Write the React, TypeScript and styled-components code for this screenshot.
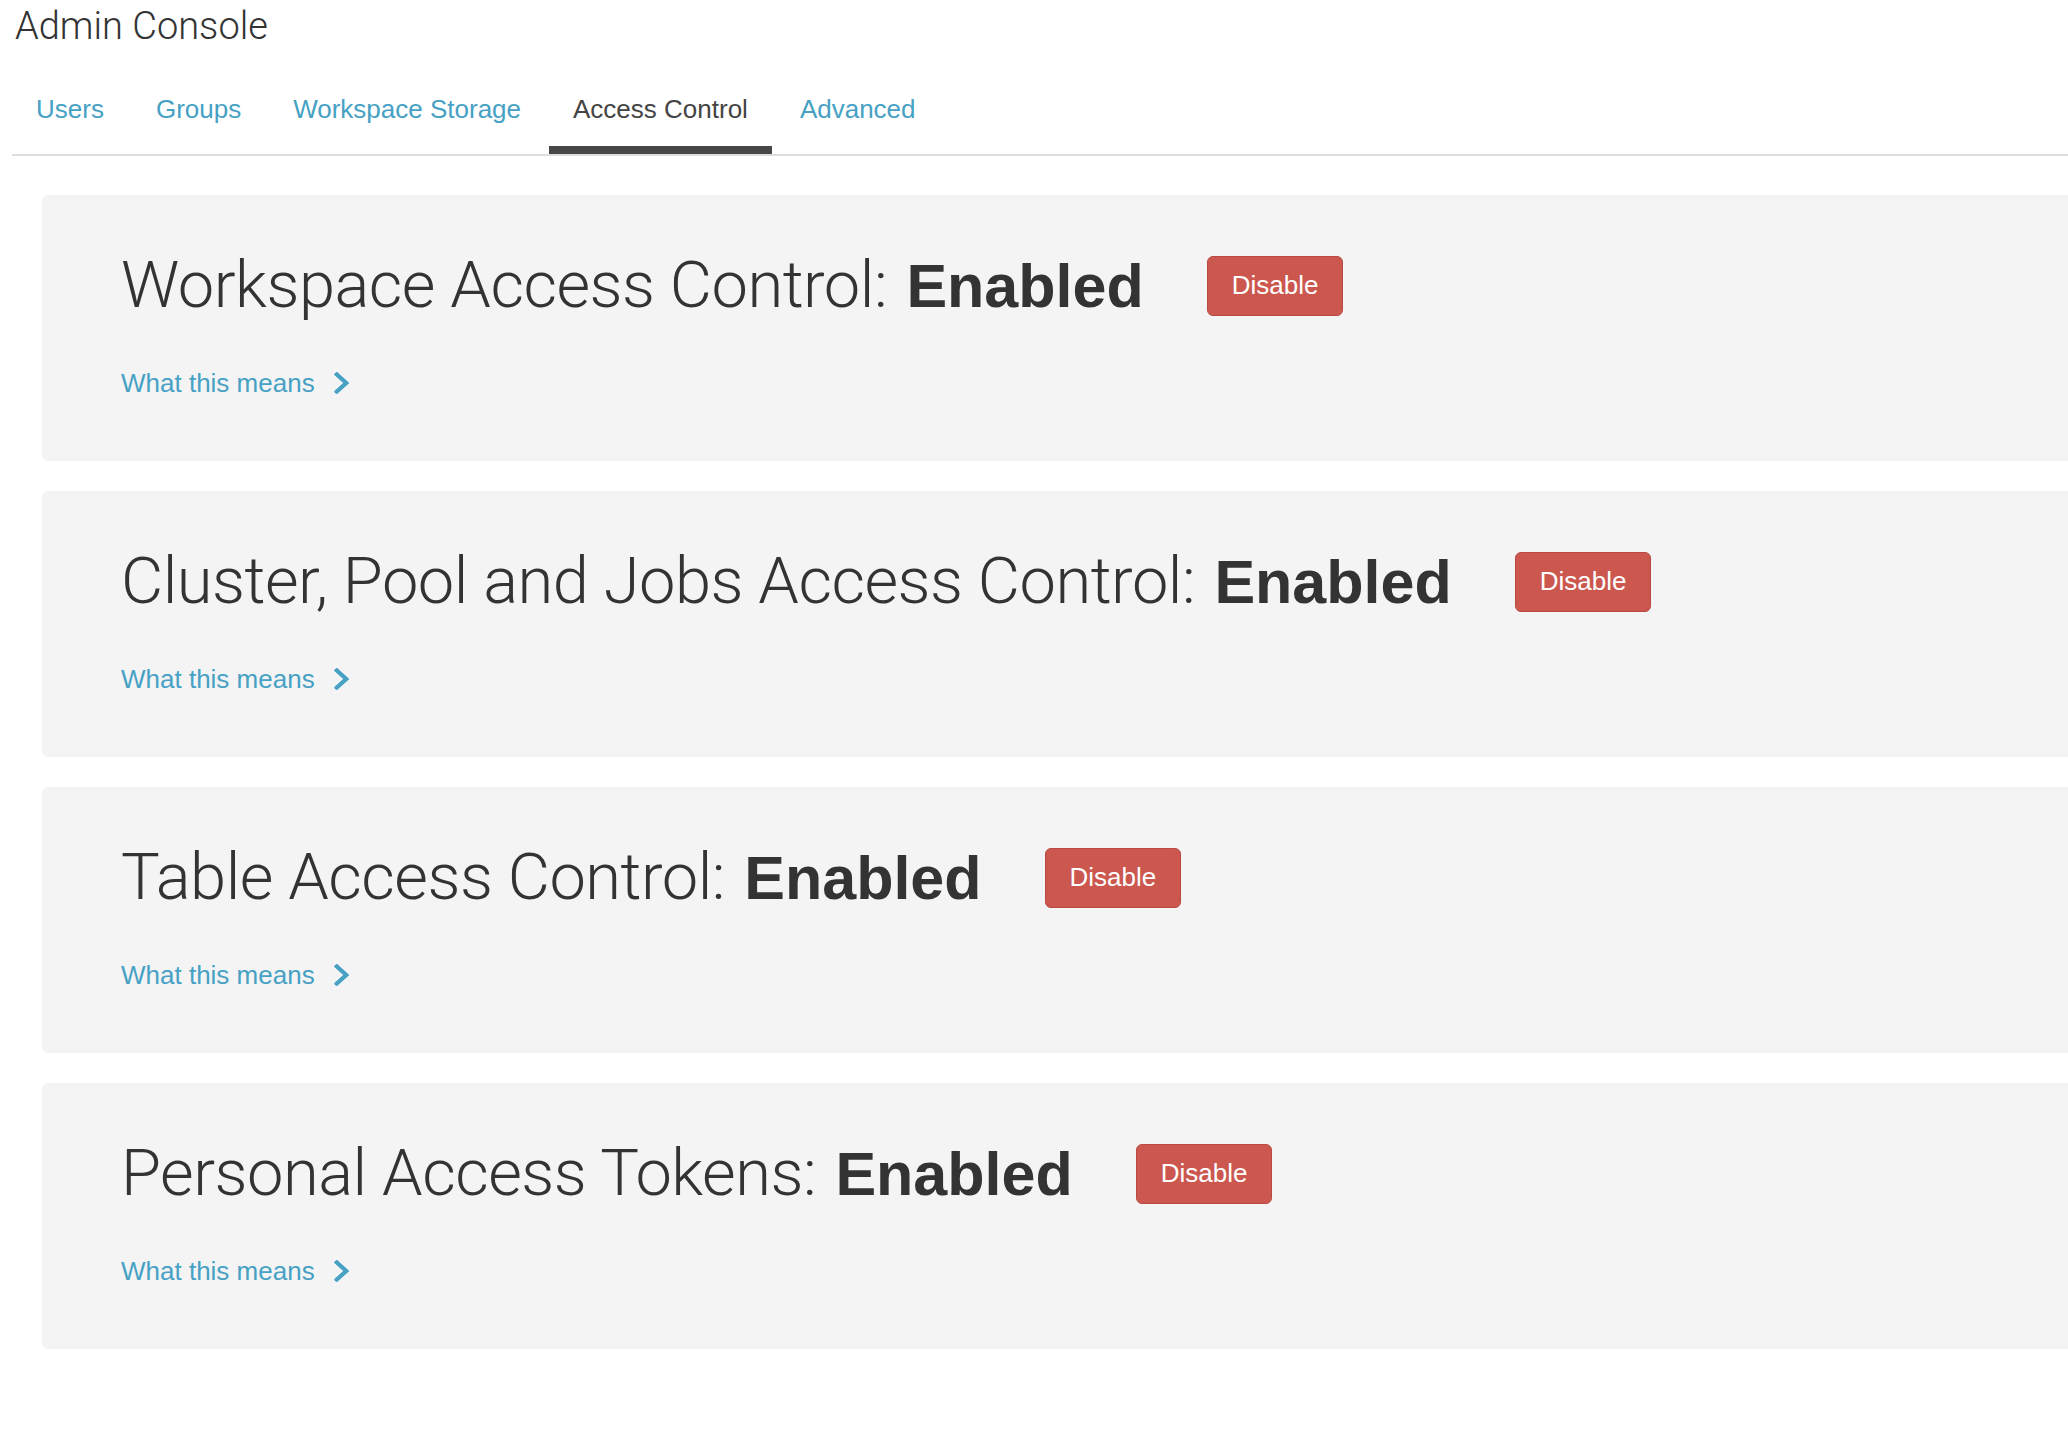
import React from "react";
import styled, { createGlobalStyle } from "styled-components";

const GlobalStyle = createGlobalStyle`
  html, body { margin: 0; padding: 0; background: #ffffff; }
  body { font-family: "Liberation Sans", Arial, sans-serif; color: #333333; }
`;

const Page = styled.div`
  overflow: hidden;
  min-height: 1438px;
`;

const Title = styled.h1`
  margin: 0;
  padding: 4px 0 0 15px;
  font-family: "Roboto", "Liberation Sans", sans-serif;
  font-weight: 300;
  font-size: 38px;
  line-height: 44px;
  color: #333333;
`;

const TabBar = styled.nav`
  display: flex;
  gap: 4px;
  margin: 46px 0 0 12px;
  border-bottom: 2px solid #dddddd;
`;

const Tab = styled.a<{ $active?: boolean }>`
  display: block;
  padding: 0 24px 22px;
  font-size: 26px;
  line-height: 30px;
  color: ${(p) => (p.$active ? "#444444" : "#46a1c4")};
  border-bottom: 8px solid ${(p) => (p.$active ? "#474747" : "transparent")};
  text-decoration: none;
  cursor: pointer;
`;

const CardList = styled.div`
  display: flex;
  flex-direction: column;
  gap: 30px;
  margin: 39px -60px 0 42px;
`;

const Card = styled.section`
  height: 266px;
  box-sizing: border-box;
  padding: 55px 0 0 79px;
  background: #f4f4f4;
  border-radius: 6px;
`;

const HeaderRow = styled.div`
  display: flex;
  align-items: center;
`;

const Heading = styled.h2`
  margin: 0;
  font-family: "Roboto", "Liberation Sans", sans-serif;
  font-weight: 300;
  font-size: 65px;
  letter-spacing: -0.5px;
  line-height: 70px;
  color: #333333;
  white-space: nowrap;
`;

const Status = styled.span`
  margin-left: 4px;
  font-family: "Liberation Sans", Arial, sans-serif;
  font-weight: 700;
  font-size: 61px;
  letter-spacing: 0;
`;

const DangerButton = styled.button`
  margin-left: 63px;
  height: 60px;
  padding: 0 24px;
  font-family: "Liberation Sans", Arial, sans-serif;
  font-size: 26px;
  color: #ffffff;
  background: #cb574f;
  border: 1px solid #b84a43;
  border-radius: 6px;
  cursor: pointer;
`;

const MoreLink = styled.a`
  display: inline-flex;
  align-items: center;
  gap: 19px;
  margin-top: 47px;
  font-size: 26px;
  line-height: 30px;
  color: #46a1c4;
  text-decoration: none;
  cursor: pointer;
`;

const Chevron = () => (
  <svg width="15" height="22" viewBox="24 37 269 438" preserveAspectRatio="none" aria-hidden>
    <path
      fill="#46a1c4"
      d="M285.476 272.971L91.132 467.314c-9.373 9.373-24.569 9.373-33.941 0l-22.667-22.667c-9.357-9.357-9.375-24.522-.04-33.901L188.505 256 34.484 101.255c-9.335-9.379-9.317-24.544.04-33.901l22.667-22.667c9.373-9.373 24.569-9.373 33.941 0L285.475 239.03c9.373 9.372 9.373 24.568.001 33.941z"
    />
  </svg>
);

const sections = [
  "Workspace Access Control:",
  "Cluster, Pool and Jobs Access Control:",
  "Table Access Control:",
  "Personal Access Tokens:",
];

const tabs = ["Users", "Groups", "Workspace Storage", "Access Control", "Advanced"];

export default function App() {
  return (
    <Page>
      <GlobalStyle />
      <Title>Admin Console</Title>
      <TabBar>
        {tabs.map((t) => (
          <Tab key={t} $active={t === "Access Control"}>
            {t}
          </Tab>
        ))}
      </TabBar>
      <CardList>
        {sections.map((s) => (
          <Card key={s}>
            <HeaderRow>
              <Heading>
                {s} <Status>Enabled</Status>
              </Heading>
              <DangerButton>Disable</DangerButton>
            </HeaderRow>
            <MoreLink>
              What this means
              <Chevron />
            </MoreLink>
          </Card>
        ))}
      </CardList>
    </Page>
  );
}
